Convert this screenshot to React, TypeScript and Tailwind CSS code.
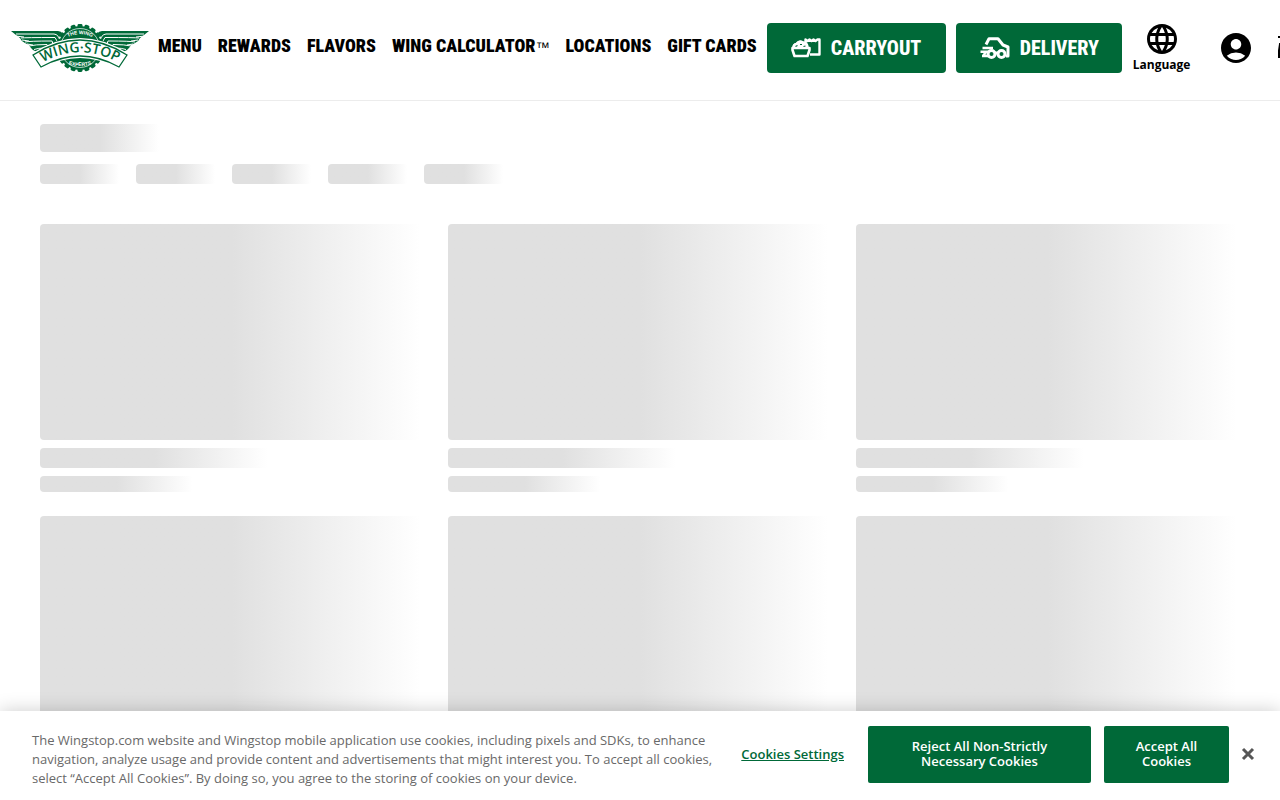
import React from "react";
import { MdLanguage, MdAccountCircle } from "react-icons/md";

const navLinks = ["MENU", "REWARDS", "FLAVORS", "WING CALCULATOR", "LOCATIONS", "GIFT CARDS"];

const condensed = "font-['Roboto_Condensed','Liberation_Sans_Narrow','Liberation_Sans',sans-serif]";

const teeth = Array.from({ length: 20 }, (_, i) => i * 18);

function Wing() {
  return (
    <g>
      <path d="M0 7H47Q50 7 52 10L56 15L44 22L33 28H26L22 26Q18 22 18 21L14 19Q10 17 9 14L5 11Z" fill="#006938" />
      <path
        d="M5 10H43Q46 10 47.500 13L50 17M10 14Q14 13.500 44 13.500L46 17M14 18Q18 17 41 17L42 20M18 22Q24 20.500 36 20.500L37 23M23 25.500Q27 24 34 24"
        fill="none"
        stroke="#fff"
        strokeWidth="1"
      />
      <path d="M4 12L13 13M11 16L18 17M16 20L22 21" fill="none" stroke="#fff" strokeWidth="1" />
    </g>
  );
}

function Logo() {
  return (
    <svg viewBox="0 0 138 48" className="h-12 w-[138px]" role="img" aria-label="Wingstop">
      <Wing />
      <g transform="translate(138 0) scale(-1 1)">
        <Wing />
      </g>
      <g transform="translate(69 24)">
        <circle r="23.5" fill="#fff" />
        {teeth.map((a) => (
          <rect key={a} x="-2.5" y="-24" width="5" height="5" rx="1.4" fill="#006938" transform={`rotate(${a})`} />
        ))}
        <circle r="22" fill="#006938" />
        <circle r="19.5" fill="none" stroke="#fff" strokeWidth="0.7" />
      </g>
      <path d="M22 31Q69 1 116 31L108 43Q69 21 30 43Z" fill="#fff" stroke="#fff" strokeWidth="4" />
      <path d="M22 31Q69 1 116 31L108 43Q69 21 30 43Z" fill="#fff" stroke="#006938" strokeWidth="1.3" />
      <path id="logo-arc" d="M26 41.500Q69 15 112 41.500" fill="none" />
      <path id="logo-top" d="M52 16Q69 4 86 16" fill="none" />
      <path id="logo-low" d="M53 38.500Q69 46 85 38.500" fill="none" />
      <text fill="#006938" className="font-['Open_Sans',sans-serif] text-[14px] font-semibold" textAnchor="middle">
        <textPath href="#logo-arc" startOffset="50%">WING·STOP</textPath>
      </text>
      <text fill="#fff" className="font-['Liberation_Sans',sans-serif] text-[5px] font-bold" textAnchor="middle">
        <textPath href="#logo-top" startOffset="50%">THE WING</textPath>
      </text>
      <text fill="#fff" className="font-['Liberation_Sans',sans-serif] text-[5px] font-bold" textAnchor="middle">
        <textPath href="#logo-low" startOffset="50%">EXPERTS</textPath>
      </text>
    </svg>
  );
}

function CarryoutIcon() {
  return (
    <svg viewBox="0 0 30 20" className="h-5 w-[30px]" fill="none" stroke="#fff" strokeWidth="2.4" strokeLinejoin="round" aria-hidden="true">
      <path d="M14.500 5V1.500L16.500 3L18.500 1.500L20.500 3L22.500 1.500L24.500 3L26.500 1.500L28.500 1.500V16.500H19" />
      <path d="M1.500 10H18.500V12L16.500 18H3.500L1.500 12Z" strokeWidth="2.6" />
      <path d="M1.500 10Q1 6 5 5Q8 1.500 12 3.500Q17 4 17.500 10Z" fill="#fff" stroke="none" />
      <path d="M2.500 9.500Q2.500 6.500 5.500 6Q8 2 12 4.500Q16.500 5 16.500 9.500" />
      <path d="M4.500 8.500L6.500 7.500M9 6.500H11M12.500 8.500L14.500 8" stroke="#006938" strokeWidth="1.200" />
    </svg>
  );
}

function DeliveryIcon() {
  return (
    <svg viewBox="0 0 30 22" className="h-[22px] w-[30px]" fill="none" stroke="#fff" strokeWidth="3" strokeLinejoin="round" aria-hidden="true">
      <path d="M6 7.500L9 1.800H18L23 8L28 10V19H26" />
      <path d="M2.500 11H13M0.500 14.700H9M2 19H8M6 15L3 19" strokeWidth="2.4" />
      <circle cx="11.500" cy="17" r="3.500" />
      <circle cx="21.500" cy="17" r="3.500" />
      <path d="M14 16H18" />
    </svg>
  );
}

function Bone({ className }: { className: string }) {
  return <div className={`rounded bg-linear-to-r from-[#e0e0e0] from-50% to-white to-99% ${className}`} />;
}

export default function App() {
  return (
    <div className="relative h-screen overflow-hidden bg-white font-['Open_Sans',sans-serif] text-black">
      <header className="flex h-[101px] items-start border-b border-[#ececec] pl-[11px] whitespace-nowrap">
        <a href="#home" className="mt-6 shrink-0">
          <Logo />
        </a>
        <nav className={`mt-8 ml-[9px] flex shrink-0 gap-4 text-[18px] leading-7 font-black ${condensed}`}>
          {navLinks.map((label) => (
            <a key={label} href="#nav">
              {label}
              {label === "WING CALCULATOR" && (
                <span className="font-['Liberation_Sans',sans-serif] text-sm font-normal">™</span>
              )}
            </a>
          ))}
        </nav>
        <div className={`mt-[23px] ml-[10px] flex shrink-0 gap-[10px] text-[20px] font-extrabold text-white ${condensed}`}>
          <button className="flex h-[50px] w-[179px] items-center gap-[10px] rounded bg-[#006938] pl-6">
            <CarryoutIcon />
            CARRYOUT
          </button>
          <button className="flex h-[50px] w-[166px] items-center gap-[10px] rounded bg-[#006938] pl-6">
            <DeliveryIcon />
            DELIVERY
          </button>
        </div>
        <button className="mt-[21px] ml-[11px] flex shrink-0 flex-col items-center text-xs leading-4 font-bold">
          <MdLanguage className="size-9" aria-hidden="true" />
          Language
        </button>
        <button className="mt-[30px] ml-7 shrink-0" aria-label="Account">
          <MdAccountCircle className="size-9" />
        </button>
        <button className="mt-9 ml-6 shrink-0" aria-label="Bag">
          <svg viewBox="0 0 24 24" className="size-6" aria-hidden="true">
            <path d="M0 1H2M2 8H21L23 21H0Z" stroke="#000" strokeWidth="2" />
          </svg>
        </button>
      </header>

      <main className="px-10 pt-[23px]">
        <Bone className="h-7 w-[120px]" />
        <div className="mt-3 flex gap-4">
          {[0, 1, 2, 3, 4].map((i) => (
            <Bone key={i} className="h-5 w-20" />
          ))}
        </div>
        <div className="mt-10 grid grid-cols-3 gap-6">
          {[0, 1, 2, 3, 4, 5].map((i) => (
            <div key={i} className="flex flex-col gap-2">
              <Bone className="h-[216px]" />
              <Bone className="h-5 w-3/5" />
              <Bone className="h-4 w-2/5" />
            </div>
          ))}
        </div>
      </main>

      <section
        aria-label="Cookie notice"
        className="absolute inset-x-0 bottom-0 flex h-[89px] items-start bg-white pl-8 shadow-[0_0_18px_rgba(0,0,0,0.2)]"
      >
        <p className="mt-5 w-[690px] text-[13px] leading-[19px] text-[#696969]">
          The Wingstop.com website and Wingstop mobile application use cookies, including pixels and SDKs, to enhance
          navigation, analyze usage and provide content and advertisements that might interest you. To accept all
          cookies, select “Accept All Cookies”. By doing so, you agree to the storing of cookies on your device.
        </p>
        <div className="mt-[15px] mr-[25px] ml-auto flex shrink-0 items-center text-[13px] leading-[15px] font-semibold">
          <button className="mr-6 text-[#006938] underline">Cookies Settings</button>
          <button className="mr-[13px] h-[57px] w-[223px] rounded-xs bg-[#006938] px-8 pb-px text-white">
            Reject All Non-Strictly Necessary Cookies
          </button>
          <button className="mr-3 h-[57px] w-[125px] rounded-xs bg-[#006938] px-6 pb-px text-white">
            Accept All Cookies
          </button>
          <button aria-label="Close" className="pb-0.5">
            <svg viewBox="0 0 14 14" className="size-[14px]" stroke="#565656" strokeWidth="3" aria-hidden="true">
              <path d="M2 2L12 12M12 2L2 12" />
            </svg>
          </button>
        </div>
      </section>
    </div>
  );
}
